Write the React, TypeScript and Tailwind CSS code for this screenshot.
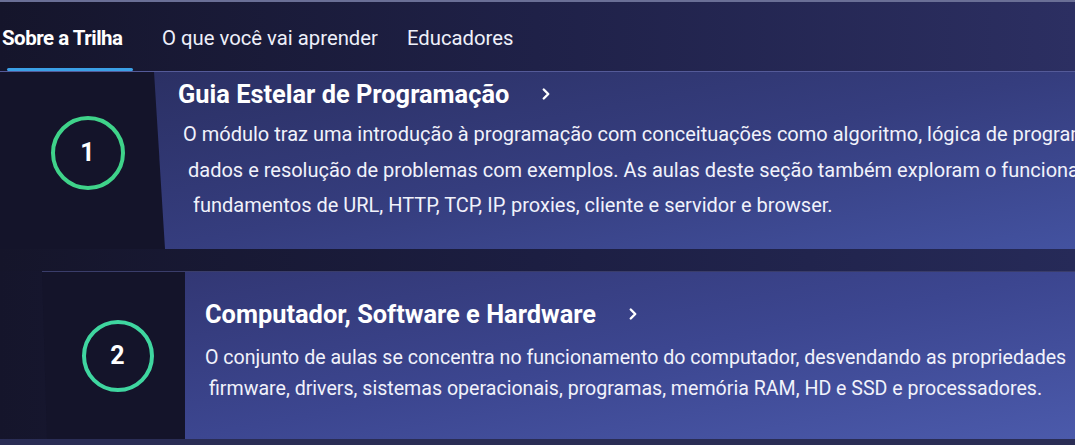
import React from 'react';
import { ChevronRight } from 'lucide-react';

type Modulo = {
  numero: number;
  titulo: string;
  linhas: string[];
};

const modulos: Modulo[] = [
  {
    numero: 1,
    titulo: 'Guia Estelar de Programação',
    linhas: [
      'O módulo traz uma introdução à programação com conceituações como algoritmo, lógica de programação, estrutura de',
      'dados e resolução de problemas com exemplos. As aulas deste seção também exploram o funcionamento da internet e os',
      'fundamentos de URL, HTTP, TCP, IP, proxies, cliente e servidor e browser.'
    ]
  },
  {
    numero: 2,
    titulo: 'Computador, Software e Hardware',
    linhas: [
      'O conjunto de aulas se concentra no funcionamento do computador, desvendando as propriedades',
      'firmware, drivers, sistemas operacionais, programas, memória RAM, HD e SSD e processadores.'
    ]
  }
];

const tabs = ['Sobre a Trilha', 'O que você vai aprender', 'Educadores'];

function Tabs() {
  return (
    <div className="flex h-[69px] items-start gap-[29px] pl-[2px] pt-[22px]">
      {tabs.map((tab, index) => (
        <div key={tab} className="flex flex-col">
          <span
            className={
              index === 0
                ? 'text-[20.5px] font-bold leading-[28px] tracking-[-0.5px] text-white'
                : 'text-[20.3px] leading-[28px] text-[#eef0fa]'
            }
          >
            {tab}
          </span>
          {index === 0 && <div className="ml-[5px] mt-[16px] h-[3px] w-[126px] rounded-full bg-[#3ba0e6]" />}
        </div>
      ))}
    </div>
  );
}

function ModuloCard({ modulo, first }: { modulo: Modulo; first: boolean }) {
  return (
    <div
      className={
        first
          ? 'flex h-[178px] border-t border-[#545a98]'
          : 'ml-[42px] flex h-[168px] border-t border-[#3a3d6a]'
      }
    >
      <div
        className={
          first
            ? 'flex w-[165px] shrink-0 items-center justify-center bg-[#14142a] pb-[16px] [clip-path:polygon(0_0,154px_0,100%_100%,0_100%)]'
            : 'flex w-[143px] shrink-0 items-center justify-center bg-[#14142a] [clip-path:polygon(0_0,100%_0,100%_100%,5px_100%)]'
        }
      >
        <div
          className={
            first
              ? 'ml-[10px] flex h-[74px] w-[74px] items-center justify-center rounded-full border-[4px] border-[#3fd38a]'
              : 'ml-[8px] flex h-[72px] w-[72px] items-center justify-center rounded-full border-[4px] border-[#3fd6a0]'
          }
        >
          <span className="text-[25px] font-bold text-white">{modulo.numero}</span>
        </div>
      </div>
      <div
        className={
          first
            ? '-ml-[12px] flex-1 overflow-hidden bg-gradient-to-br from-[#2b3064] via-[#353d7e] to-[#4352a0] pl-[25px] pt-[6px]'
            : '-ml-[4px] flex-1 overflow-hidden bg-gradient-to-br from-[#323774] via-[#3c4690] to-[#4b5aab] pl-[24px] pt-[26px]'
        }
      >
        <div className="flex items-center gap-[28px]">
          <h2 className="text-[25.4px] font-bold leading-[32px] text-white">{modulo.titulo}</h2>
          <ChevronRight size={18} strokeWidth={3.2} className="text-white" />
        </div>
        <div className={first ? 'mt-[7px] pl-[5px]' : 'mt-[12px]'}>
          {modulo.linhas.map((linha, i) => (
            <p
              key={i}
              style={{ paddingLeft: first ? i * 5 : i * 4 }}
              className={
                first
                  ? 'whitespace-nowrap text-[20px] leading-[35.5px] text-[#f1f2fb]'
                  : 'whitespace-nowrap text-[19.6px] leading-[31px] text-[#f1f2fb]'
              }
            >
              {linha}
            </p>
          ))}
        </div>
      </div>
    </div>
  );
}

export default function App() {
  return (
    <div className="h-[445px] w-[1075px] overflow-hidden bg-gradient-to-r from-[#15152b] via-[#1f2148] to-[#2c2f62] font-['Roboto',sans-serif]">
      <div className="h-[2px] bg-[#6a6f96]" />
      <Tabs />
      <ModuloCard modulo={modulos[0]} first />
      <div className="h-[22px] bg-gradient-to-r from-[#15152a] via-[#1c1e42] to-[#262a58]" />
      <ModuloCard modulo={modulos[1]} first={false} />
      <div className="h-[6px] bg-[#2a2d55]" />
    </div>
  );
}
